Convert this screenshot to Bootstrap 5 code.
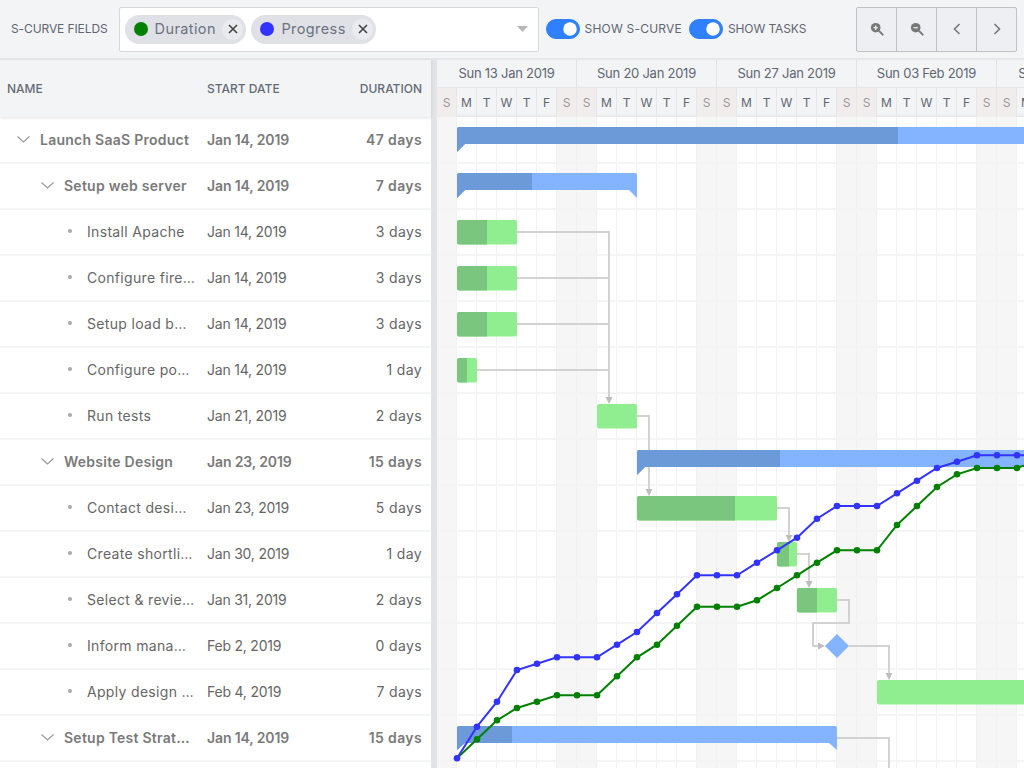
<!DOCTYPE html>
<html lang="en">
<head>
<meta charset="utf-8">
<title>Gantt</title>
<link href="https://cdn.jsdelivr.net/npm/bootstrap@5.3.0/dist/css/bootstrap.min.css" rel="stylesheet">
<style>
html,body{height:768px;overflow:hidden}
body{font-family:Inter,"Liberation Sans",sans-serif;background:#f3f4f6;color:#666;width:1024px}
.topbar{height:60px;padding:0 7px 0 11px;border-bottom:2px solid #e6e7ea}
.caps{font-size:12px;color:#5f6672;letter-spacing:-.1px;white-space:nowrap}
.caps-wide{letter-spacing:.2px}
.picker{width:420px;height:45px;margin-left:11px;background:#fff;border:1px solid #d6d8dd;border-radius:2px;padding-left:5px;gap:5px}
.chip{height:29px;background:#e0e1e6;border-radius:15px;padding:0 3px 0 9px;font-size:14.5px;color:#6b7280;letter-spacing:.4px}
.chip-dot{width:14px;height:14px;border-radius:50%;margin-right:7px}
.chip-x{width:21px;height:21px;border-radius:50%;background:#eaebee;margin-left:6.500px}
.caret{margin-left:auto;margin-right:10px}
.toggle{gap:5px;padding:0;margin:0;min-height:0}
.toggle .form-check-input{width:34px;height:20px;margin:0;float:none;background-color:#2e80ff;border-color:#2e80ff}
.first-toggle{margin-left:7px}
.second-toggle{margin-left:7px}
.tools{margin-left:auto}
.tools .btn{width:41px;height:45px;padding:0;background:#eeeff2;border-color:#bfc1c5;border-radius:2px;display:flex;align-items:center;justify-content:center}
.pane{height:708px}
.leftpane{width:431px;flex:none;background:#fff}
.split{width:6px;flex:none;background:#e2e3e7}
.rightpane{width:587px;flex:none;overflow:hidden}
.head-left{height:57px;background:#f3f4f6;padding:0 9px 0 7px;box-shadow:0 1px 3px rgba(0,0,0,.12);position:relative;font-size:12px;font-weight:500;color:#646b76}
.head-name{width:200px}
.task-row{height:46px;border-bottom:1px solid #f3f4f6;box-shadow:0 1px 0 #f3f4f6;padding:0 9px 1px 0;font-size:14px;color:#666}
.task-row.parent{font-weight:600;color:#7a7a7a}
.cell-name{width:207px;flex:none;min-width:0;white-space:nowrap;letter-spacing:.32px}
.parent .cell-name{letter-spacing:.25px}
.lvl0{padding-left:17px}
.lvl1{padding-left:41px}
.lvl2{padding-left:68px}
.fold{flex:none;margin-right:10px}
.dot-mark{width:4px;height:4px;border-radius:50%;background:#aaa;flex:none;margin-right:15px}
.cell-date{width:120px;flex:none;letter-spacing:-.22px}
.parent .cell-date{letter-spacing:-.13px}
.cell-dur{flex:1;letter-spacing:.37px}
.week{width:140px;flex:none}
.week-label{height:28px;font-size:13px;color:#5f6672;border-right:1px solid #e0e1e4;border-bottom:1px solid #e6e7ea;white-space:nowrap;letter-spacing:-.25px}
.weeks{height:57px}
.day{width:20px;height:29px;font-size:12px;color:#5f6672;border-right:1px solid #e6e7ea}
.day.off{background:#f2eded;color:#999}
.chart{display:block;box-shadow:0 -1px 3px rgba(0,0,0,.08)}
</style>
</head>
<body>
<div class="topbar d-flex align-items-center">
  <span class="caps">S-CURVE FIELDS</span>
  <div class="picker d-flex align-items-center">
    <span class="chip d-inline-flex align-items-center"><span class="chip-dot" style="background:#008000"></span>Duration<span class="chip-x d-flex align-items-center justify-content-center"><svg width="10" height="10" viewBox="0 0 10 10"><path d="M1 1l8 8M9 1l-8 8" stroke="#444" stroke-width="1.6" fill="none"/></svg></span></span>
    <span class="chip d-inline-flex align-items-center"><span class="chip-dot" style="background:#3333ff"></span>Progress<span class="chip-x d-flex align-items-center justify-content-center"><svg width="10" height="10" viewBox="0 0 10 10"><path d="M1 1l8 8M9 1l-8 8" stroke="#444" stroke-width="1.6" fill="none"/></svg></span></span>
    <svg class="caret" width="11" height="6" viewBox="0 0 11 6"><path d="M0 0h11L5.500 6z" fill="#b5b7bb"/></svg>
  </div>
  <div class="form-check form-switch toggle d-flex align-items-center first-toggle"><input class="form-check-input" type="checkbox" id="sc" checked><label class="caps caps-wide" for="sc">SHOW S-CURVE</label></div>
  <div class="form-check form-switch toggle d-flex align-items-center second-toggle"><input class="form-check-input" type="checkbox" id="st" checked><label class="caps" for="st">SHOW TASKS</label></div>
  <div class="btn-group tools">
    <button class="btn" type="button" aria-label="Zoom in"><svg width="14" height="14" viewBox="0 0 16 16"><circle cx="6.500" cy="6.500" r="5.500" fill="#777"/><path d="M10.500 10.500l4 4" stroke="#777" stroke-width="2.200" stroke-linecap="round"/><path d="M4 6.500h5M6.500 4v5" stroke="#eee" stroke-width="1.500"/></svg></button>
    <button class="btn" type="button" aria-label="Zoom out"><svg width="14" height="14" viewBox="0 0 16 16"><circle cx="6.500" cy="6.500" r="5.500" fill="#777"/><path d="M10.500 10.500l4 4" stroke="#777" stroke-width="2.200" stroke-linecap="round"/><path d="M4 6.500h5" stroke="#eee" stroke-width="1.500"/></svg></button>
    <button class="btn" type="button" aria-label="Previous"><svg width="8" height="12" viewBox="0 0 8 12"><path d="M6.500 1L1.500 6l5 5" stroke="#777" stroke-width="1.600" fill="none"/></svg></button>
    <button class="btn" type="button" aria-label="Next"><svg width="8" height="12" viewBox="0 0 8 12"><path d="M1.500 1l5 5-5 5" stroke="#777" stroke-width="1.600" fill="none"/></svg></button>
  </div>
</div>
<div class="pane d-flex">
  <div class="leftpane">
    <div class="head-left d-flex align-items-center">
      <span class="head-name">NAME</span><span>START DATE</span><span class="ms-auto">DURATION</span>
    </div>
    <div class="task-row parent d-flex align-items-center"><div class="cell-name lvl0 d-flex align-items-center"><svg class="fold" width="13" height="7" viewBox="0 0 13 7"><path d="M.5.500l6 5.500 6-5.500" stroke="#999" stroke-width="1.200" fill="none"/></svg><span>Launch SaaS Product</span></div><div class="cell-date">Jan 14, 2019</div><div class="cell-dur text-end">47 days</div></div>
    <div class="task-row parent d-flex align-items-center"><div class="cell-name lvl1 d-flex align-items-center"><svg class="fold" width="13" height="7" viewBox="0 0 13 7"><path d="M.5.500l6 5.500 6-5.500" stroke="#999" stroke-width="1.200" fill="none"/></svg><span>Setup web server</span></div><div class="cell-date">Jan 14, 2019</div><div class="cell-dur text-end">7 days</div></div>
    <div class="task-row d-flex align-items-center"><div class="cell-name lvl2 d-flex align-items-center"><span class="dot-mark"></span><span>Install Apache</span></div><div class="cell-date">Jan 14, 2019</div><div class="cell-dur text-end">3 days</div></div>
    <div class="task-row d-flex align-items-center"><div class="cell-name lvl2 d-flex align-items-center"><span class="dot-mark"></span><span>Configure fire…</span></div><div class="cell-date">Jan 14, 2019</div><div class="cell-dur text-end">3 days</div></div>
    <div class="task-row d-flex align-items-center"><div class="cell-name lvl2 d-flex align-items-center"><span class="dot-mark"></span><span>Setup load b…</span></div><div class="cell-date">Jan 14, 2019</div><div class="cell-dur text-end">3 days</div></div>
    <div class="task-row d-flex align-items-center"><div class="cell-name lvl2 d-flex align-items-center"><span class="dot-mark"></span><span>Configure po…</span></div><div class="cell-date">Jan 14, 2019</div><div class="cell-dur text-end">1 day</div></div>
    <div class="task-row d-flex align-items-center"><div class="cell-name lvl2 d-flex align-items-center"><span class="dot-mark"></span><span>Run tests</span></div><div class="cell-date">Jan 21, 2019</div><div class="cell-dur text-end">2 days</div></div>
    <div class="task-row parent d-flex align-items-center"><div class="cell-name lvl1 d-flex align-items-center"><svg class="fold" width="13" height="7" viewBox="0 0 13 7"><path d="M.5.500l6 5.500 6-5.500" stroke="#999" stroke-width="1.200" fill="none"/></svg><span>Website Design</span></div><div class="cell-date">Jan 23, 2019</div><div class="cell-dur text-end">15 days</div></div>
    <div class="task-row d-flex align-items-center"><div class="cell-name lvl2 d-flex align-items-center"><span class="dot-mark"></span><span>Contact desi…</span></div><div class="cell-date">Jan 23, 2019</div><div class="cell-dur text-end">5 days</div></div>
    <div class="task-row d-flex align-items-center"><div class="cell-name lvl2 d-flex align-items-center"><span class="dot-mark"></span><span>Create shortli…</span></div><div class="cell-date">Jan 30, 2019</div><div class="cell-dur text-end">1 day</div></div>
    <div class="task-row d-flex align-items-center"><div class="cell-name lvl2 d-flex align-items-center"><span class="dot-mark"></span><span>Select &amp; revie…</span></div><div class="cell-date">Jan 31, 2019</div><div class="cell-dur text-end">2 days</div></div>
    <div class="task-row d-flex align-items-center"><div class="cell-name lvl2 d-flex align-items-center"><span class="dot-mark"></span><span>Inform mana…</span></div><div class="cell-date">Feb 2, 2019</div><div class="cell-dur text-end">0 days</div></div>
    <div class="task-row d-flex align-items-center"><div class="cell-name lvl2 d-flex align-items-center"><span class="dot-mark"></span><span>Apply design …</span></div><div class="cell-date">Feb 4, 2019</div><div class="cell-dur text-end">7 days</div></div>
    <div class="task-row parent d-flex align-items-center"><div class="cell-name lvl1 d-flex align-items-center"><svg class="fold" width="13" height="7" viewBox="0 0 13 7"><path d="M.5.500l6 5.500 6-5.500" stroke="#999" stroke-width="1.200" fill="none"/></svg><span>Setup Test Strat…</span></div><div class="cell-date">Jan 14, 2019</div><div class="cell-dur text-end">15 days</div></div>
  </div>
  <div class="split"></div>
  <div class="rightpane">
    <div class="weeks d-flex">
      <div class="week"><div class="week-label d-flex align-items-center justify-content-center">Sun 13 Jan 2019</div><div class="d-flex"><div class="day off d-flex align-items-center justify-content-center">S</div><div class="day d-flex align-items-center justify-content-center">M</div><div class="day d-flex align-items-center justify-content-center">T</div><div class="day d-flex align-items-center justify-content-center">W</div><div class="day d-flex align-items-center justify-content-center">T</div><div class="day d-flex align-items-center justify-content-center">F</div><div class="day off d-flex align-items-center justify-content-center">S</div></div></div>
      <div class="week"><div class="week-label d-flex align-items-center justify-content-center">Sun 20 Jan 2019</div><div class="d-flex"><div class="day off d-flex align-items-center justify-content-center">S</div><div class="day d-flex align-items-center justify-content-center">M</div><div class="day d-flex align-items-center justify-content-center">T</div><div class="day d-flex align-items-center justify-content-center">W</div><div class="day d-flex align-items-center justify-content-center">T</div><div class="day d-flex align-items-center justify-content-center">F</div><div class="day off d-flex align-items-center justify-content-center">S</div></div></div>
      <div class="week"><div class="week-label d-flex align-items-center justify-content-center">Sun 27 Jan 2019</div><div class="d-flex"><div class="day off d-flex align-items-center justify-content-center">S</div><div class="day d-flex align-items-center justify-content-center">M</div><div class="day d-flex align-items-center justify-content-center">T</div><div class="day d-flex align-items-center justify-content-center">W</div><div class="day d-flex align-items-center justify-content-center">T</div><div class="day d-flex align-items-center justify-content-center">F</div><div class="day off d-flex align-items-center justify-content-center">S</div></div></div>
      <div class="week"><div class="week-label d-flex align-items-center justify-content-center">Sun 03 Feb 2019</div><div class="d-flex"><div class="day off d-flex align-items-center justify-content-center">S</div><div class="day d-flex align-items-center justify-content-center">M</div><div class="day d-flex align-items-center justify-content-center">T</div><div class="day d-flex align-items-center justify-content-center">W</div><div class="day d-flex align-items-center justify-content-center">T</div><div class="day d-flex align-items-center justify-content-center">F</div><div class="day off d-flex align-items-center justify-content-center">S</div></div></div>
      <div class="week"><div class="week-label d-flex align-items-center justify-content-center">Sun 10 Feb 2019</div><div class="d-flex"><div class="day off d-flex align-items-center justify-content-center">S</div><div class="day d-flex align-items-center justify-content-center">M</div><div class="day d-flex align-items-center justify-content-center">T</div><div class="day d-flex align-items-center justify-content-center">W</div><div class="day d-flex align-items-center justify-content-center">T</div><div class="day d-flex align-items-center justify-content-center">F</div><div class="day off d-flex align-items-center justify-content-center">S</div></div></div>
    </div>
    <svg class="chart" width="587" height="651" viewBox="437 117 587 651" xmlns="http://www.w3.org/2000/svg">
      <defs>
        <pattern id="vgrid" x="437" y="0" width="20" height="46" patternUnits="userSpaceOnUse"><path d="M19.500 0V46" stroke="#f1f1f1" stroke-width="1"/></pattern>
      </defs>
      <rect x="437" y="117" width="587" height="651" fill="#fff"/>
      <g fill="#f6f6f6"><rect x="437" y="117" width="20" height="651"/><rect x="557" y="117" width="40" height="651"/><rect x="697" y="117" width="40" height="651"/><rect x="837" y="117" width="40" height="651"/><rect x="977" y="117" width="40" height="651"/></g>
      <rect x="437" y="117" width="587" height="651" fill="url(#vgrid)"/>
      <path d="M437 163H1024M437 209H1024M437 255H1024M437 301H1024M437 347H1024M437 393H1024M437 439H1024M437 485H1024M437 531H1024M437 577H1024M437 623H1024M437 669H1024M437 715H1024M437 761H1024" stroke="#f4f4f5" stroke-width="2"/>

      <g fill="none" stroke="#d2d2d2" stroke-width="2">
        <path d="M517 232H609V398M517 278H609M517 324H609M477 370H609"/>
        <path d="M637 416H649V489"/>
        <path d="M777 508H789V535"/>
        <path d="M797 554H809V581"/>
        <path d="M837 600H849V623H813V646H819"/>
        <path d="M849 646H889V673"/>
        <path d="M837 738H889V768"/>
      </g>
      <g fill="#bdbdbd">
        <path d="M605.500 397h7l-3.500 7z"/><path d="M645.500 489h7l-3.500 7z"/><path d="M785.500 535h7l-3.500 7z"/><path d="M805.500 581h7l-3.500 7z"/><path d="M818 642.500v7l7-3.500z"/><path d="M885.500 673h7l-3.500 7z"/>
      </g>

      <g fill="#84b4ff">
        <path d="M459 127H1024V144H465L457 152V129Q457 127 459 127Z"/>
        <path d="M459 173H635Q637 173 637 175V198L629 190H465L457 198V175Q457 173 459 173Z"/>
        <path d="M639 450H1024V467H645L637 475V452Q637 450 639 450Z"/>
        <path d="M459 726H835Q837 726 837 728V750L829 743H465L457 750V728Q457 726 459 726Z"/>
      </g>
      <g fill="#6c9ad8">
        <path d="M459 127H898V144H465L457 152V129Q457 127 459 127Z"/>
        <path d="M459 173H532V190H465L457 198V175Q457 173 459 173Z"/>
        <path d="M639 450H780V467H645L637 475V452Q637 450 639 450Z"/>
        <path d="M459 726H512V743H465L457 750V728Q457 726 459 726Z"/>
      </g>
      <g fill="#90ee90">
        <rect x="457" y="220" width="60" height="24.500" rx="2"/>
        <rect x="457" y="266" width="60" height="24.500" rx="2"/>
        <rect x="457" y="312" width="60" height="24.500" rx="2"/>
        <rect x="457" y="358" width="20" height="24.500" rx="2"/>
        <rect x="597" y="404" width="40" height="24.500" rx="2"/>
        <rect x="637" y="496" width="140" height="24.500" rx="2"/>
        <rect x="777" y="542" width="20" height="24.500" rx="2"/>
        <rect x="797" y="588" width="40" height="24.500" rx="2"/>
        <rect x="877" y="680" width="160" height="24.500" rx="2"/>
      </g>
      <g fill="#7bc67e">
        <path d="M459 220H487V244.500H459Q457 244.500 457 242.500V222Q457 220 459 220Z"/>
        <path d="M459 266H487V290.500H459Q457 290.500 457 288.500V268Q457 266 459 266Z"/>
        <path d="M459 312H487V336.500H459Q457 336.500 457 334.500V314Q457 312 459 312Z"/>
        <path d="M459 358H467V382.500H459Q457 382.500 457 380.500V360Q457 358 459 358Z"/>
        <path d="M639 496H735V520.500H639Q637 520.500 637 518.500V498Q637 496 639 496Z"/>
        <path d="M779 542H789V566.500H779Q777 566.500 777 564.500V544Q777 542 779 542Z"/>
        <path d="M799 588H817V612.500H799Q797 612.500 797 610.500V590Q797 588 799 588Z"/>
      </g>
      <path d="M837 634L849 646L837 658L825 646Z" fill="#84b4ff"/>

      <g id="green-curve" fill="#008000">
        <polyline fill="none" stroke="#008000" stroke-width="2" points="457,758.300 477,739.300 497,720.300 517,708 537,701.700 557,695.300 577,695.300 597,695.300 617,676.300 637,657.300 657,644.700 677,625.700 697,606.700 717,606.700 737,606.700 757,600.300 777,588 797,575.300 817,562.700 837,550.300 857,550.300 877,550.300 897,525 917,506 937,487 957,474.300 977,468 997,468 1017,468 1037,461"/>
        <circle cx="477" cy="739.300" r="3.300"/><circle cx="497" cy="720.300" r="3.300"/><circle cx="517" cy="708" r="3.300"/><circle cx="537" cy="701.700" r="3.300"/><circle cx="557" cy="695.300" r="3.300"/><circle cx="577" cy="695.300" r="3.300"/><circle cx="597" cy="695.300" r="3.300"/><circle cx="617" cy="676.300" r="3.300"/><circle cx="637" cy="657.300" r="3.300"/><circle cx="657" cy="644.700" r="3.300"/><circle cx="677" cy="625.700" r="3.300"/><circle cx="697" cy="606.700" r="3.300"/><circle cx="717" cy="606.700" r="3.300"/><circle cx="737" cy="606.700" r="3.300"/><circle cx="757" cy="600.300" r="3.300"/><circle cx="777" cy="588" r="3.300"/><circle cx="797" cy="575.300" r="3.300"/><circle cx="817" cy="562.700" r="3.300"/><circle cx="837" cy="550.300" r="3.300"/><circle cx="857" cy="550.300" r="3.300"/><circle cx="877" cy="550.300" r="3.300"/><circle cx="897" cy="525" r="3.300"/><circle cx="917" cy="506" r="3.300"/><circle cx="937" cy="487" r="3.300"/><circle cx="957" cy="474.300" r="3.300"/><circle cx="977" cy="468" r="3.300"/><circle cx="997" cy="468" r="3.300"/><circle cx="1017" cy="468" r="3.300"/>
      </g>
      <g id="blue-curve" fill="#3333ff">
        <polyline fill="none" stroke="#3333ff" stroke-width="2" points="457,758.300 477,726.700 497,701.700 517,670 537,663.700 557,657.300 577,657.300 597,657.300 617,644.700 637,632 657,613 677,594.300 697,575.300 717,575.300 737,575.300 757,562.700 777,550.300 797,537.700 817,518.700 837,506 857,506 877,506 897,493.300 917,480.700 937,468 957,461.700 977,455.300 997,455.300 1017,455.300 1037,455.300"/>
        <circle cx="457" cy="758.300" r="3.300"/><circle cx="477" cy="726.700" r="3.300"/><circle cx="497" cy="701.700" r="3.300"/><circle cx="517" cy="670" r="3.300"/><circle cx="537" cy="663.700" r="3.300"/><circle cx="557" cy="657.300" r="3.300"/><circle cx="577" cy="657.300" r="3.300"/><circle cx="597" cy="657.300" r="3.300"/><circle cx="617" cy="644.700" r="3.300"/><circle cx="637" cy="632" r="3.300"/><circle cx="657" cy="613" r="3.300"/><circle cx="677" cy="594.300" r="3.300"/><circle cx="697" cy="575.300" r="3.300"/><circle cx="717" cy="575.300" r="3.300"/><circle cx="737" cy="575.300" r="3.300"/><circle cx="757" cy="562.700" r="3.300"/><circle cx="777" cy="550.300" r="3.300"/><circle cx="797" cy="537.700" r="3.300"/><circle cx="817" cy="518.700" r="3.300"/><circle cx="837" cy="506" r="3.300"/><circle cx="857" cy="506" r="3.300"/><circle cx="877" cy="506" r="3.300"/><circle cx="897" cy="493.300" r="3.300"/><circle cx="917" cy="480.700" r="3.300"/><circle cx="937" cy="468" r="3.300"/><circle cx="957" cy="461.700" r="3.300"/><circle cx="977" cy="455.300" r="3.300"/><circle cx="997" cy="455.300" r="3.300"/><circle cx="1017" cy="455.300" r="3.300"/>
      </g>
    </svg>
  </div>
</div>
<script src="https://cdn.jsdelivr.net/npm/bootstrap@5.3.0/dist/js/bootstrap.bundle.min.js"></script>
</body>
</html>
